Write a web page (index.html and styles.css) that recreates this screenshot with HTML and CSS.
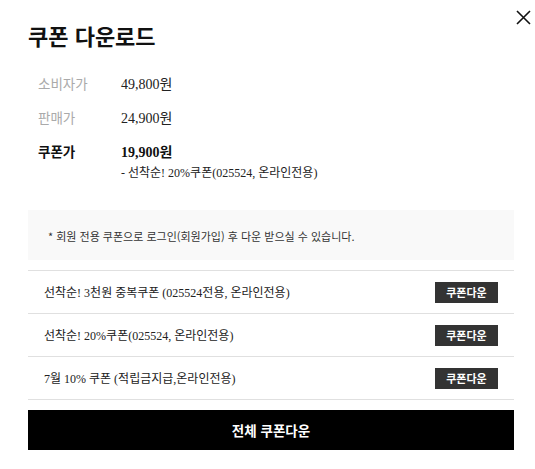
FILE: index.html
```html
<!DOCTYPE html>
<html lang="ko">
<head>
<meta charset="utf-8">
<title>쿠폰 다운로드</title>
<link rel="stylesheet" href="styles.css">
</head>
<body>
<div class="popup">
  <h1 class="title">쿠폰 다운로드</h1>
  <button class="close" aria-label="닫기">
    <svg width="15" height="15" viewBox="0 0 15 15"><path d="M1 1 L14 14 M14 1 L1 14" stroke="#111" stroke-width="1.6" fill="none"/></svg>
  </button>

  <div class="info">
    <div class="info-row">
      <span class="label">소비자가</span>
      <span class="value">49,800원</span>
    </div>
    <div class="info-row">
      <span class="label">판매가</span>
      <span class="value">24,900원</span>
    </div>
    <div class="info-row strong">
      <span class="label">쿠폰가</span>
      <span class="value">19,900원</span>
    </div>
    <div class="info-sub">- 선착순! 20%쿠폰(025524, 온라인전용)</div>
  </div>

  <div class="notice">* 회원 전용 쿠폰으로 로그인(회원가입) 후 다운 받으실 수 있습니다.</div>

  <ul class="coupons">
    <li class="coupon">
      <span class="coupon-name">선착순! 3천원 중복쿠폰 (025524전용, 온라인전용)</span>
      <button class="btn-down">쿠폰다운</button>
    </li>
    <li class="coupon">
      <span class="coupon-name">선착순! 20%쿠폰(025524, 온라인전용)</span>
      <button class="btn-down">쿠폰다운</button>
    </li>
    <li class="coupon">
      <span class="coupon-name">7월 10% 쿠폰 (적립금지급,온라인전용)</span>
      <button class="btn-down">쿠폰다운</button>
    </li>
  </ul>

  <button class="btn-all">전체 쿠폰다운</button>
</div>
</body>
</html>
```

FILE: styles.css
```css
* { box-sizing: border-box; }
html, body { margin: 0; padding: 0; background: #fff; }
body {
  font-family: "Liberation Serif", "Noto Sans CJK KR", serif;
  color: #222;
}
.popup {
  position: relative;
  width: 535px;
  padding: 22px 21px 0 28px;
}
.title {
  margin: 0;
  font-family: "Noto Sans CJK KR", sans-serif;
  font-size: 22px;
  line-height: 26px;
  font-weight: 700;
  color: #111;
}
.close {
  position: absolute;
  top: 9px;
  right: 3px;
  width: 17px;
  height: 17px;
  padding: 1px;
  border: 0;
  background: none;
  display: flex;
}
.info {
  margin-top: 25px;
  padding-left: 10px;
  display: flex;
  flex-direction: column;
  gap: 14px;
}
.info-row {
  display: flex;
  align-items: center;
  height: 20px;
}
.label {
  width: 83px;
  font-family: "Noto Sans CJK KR", sans-serif;
  font-size: 13.5px;
  color: #aaa;
}
.value {
  font-size: 14px;
  color: #222;
}
.strong .label { color: #111; font-weight: 700; }
.strong .value { font-weight: 700; color: #111; }
.info-sub {
  margin-top: -11px;
  padding-left: 83px;
  font-size: 12px;
  line-height: 18px;
  color: #222;
}
.notice {
  margin-top: 28px;
  height: 50px;
  padding: 2px 0 0 20px;
  background: #f9f9f9;
  display: flex;
  align-items: center;
  font-family: "Noto Sans CJK KR", sans-serif;
  font-size: 11px;
  color: #333;
}
.coupons {
  list-style: none;
  margin: 10px 0 0;
  padding: 0;
  border-top: 1px solid #e0e0e0;
}
.coupon {
  height: 43px;
  border-bottom: 1px solid #e0e0e0;
  display: flex;
  align-items: center;
  justify-content: space-between;
  padding: 0 16px;
}
.coupon-name {
  font-size: 12px;
  color: #222;
}
.btn-down {
  width: 63px;
  height: 21px;
  border: 0;
  padding: 0;
  background: #333;
  color: #fff;
  font-family: "Noto Sans CJK KR", sans-serif;
  font-size: 11px;
  font-weight: 700;
}
.btn-all {
  display: block;
  width: 100%;
  height: 40px;
  margin-top: 10px;
  border: 0;
  background: #000;
  color: #fff;
  font-family: "Noto Sans CJK KR", sans-serif;
  font-size: 13.5px;
  font-weight: 700;
}
```
